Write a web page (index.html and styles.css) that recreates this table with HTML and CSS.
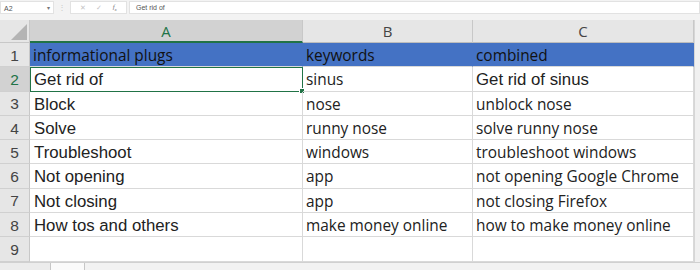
FILE: index.html
```html
<!DOCTYPE html>
<html lang="en">
<head>
    <meta charset="UTF-8">
    <title>Sheet</title>
    <link rel="stylesheet" href="styles.css">
</head>
<body>
    <div class="formula-bar">
        <div class="name-box">A2<span class="caret">&#9662;</span></div>
        <div class="dots">&#8942;</div>
        <div class="fx-box">
            <span class="fx-icon">&#10005;</span>
            <span class="fx-icon">&#10003;</span>
            <span class="fx-icon fx">f<sub>x</sub></span>
        </div>
        <div class="formula-input">Get rid of</div>
    </div>

    <div class="sheet">
        <div class="grid">
            <div class="corner"><span class="tri"></span></div>
            <div class="col-head active">A</div>
            <div class="col-head">B</div>
            <div class="col-head">C</div>

            <div class="row-head">1</div>
            <div class="cell hdr">informational plugs</div>
            <div class="cell hdr">keywords</div>
            <div class="cell hdr">combined</div>

            <div class="row-head active">2</div>
            <div class="cell a selected">Get rid of<span class="handle"></span></div>
            <div class="cell">sinus</div>
            <div class="cell big">Get rid of sinus</div>

            <div class="row-head">3</div>
            <div class="cell a">Block</div>
            <div class="cell">nose</div>
            <div class="cell">unblock nose</div>

            <div class="row-head">4</div>
            <div class="cell a">Solve</div>
            <div class="cell">runny nose</div>
            <div class="cell">solve runny nose</div>

            <div class="row-head">5</div>
            <div class="cell a">Troubleshoot</div>
            <div class="cell">windows</div>
            <div class="cell">troubleshoot windows</div>

            <div class="row-head">6</div>
            <div class="cell a">Not opening</div>
            <div class="cell">app</div>
            <div class="cell">not opening Google Chrome</div>

            <div class="row-head">7</div>
            <div class="cell a">Not closing</div>
            <div class="cell">app</div>
            <div class="cell">not closing Firefox</div>

            <div class="row-head">8</div>
            <div class="cell a">How tos and others</div>
            <div class="cell">make money online</div>
            <div class="cell">how to make money online</div>

            <div class="row-head">9</div>
            <div class="cell a"></div>
            <div class="cell"></div>
            <div class="cell"></div>
        </div>
        <div class="vscroll"></div>
    </div>

    <div class="tabs">
        <div class="tab-left"></div>
        <div class="tab-gap"></div>
        <div class="tab-right"></div>
    </div>
</body>
</html>
```

FILE: styles.css
```css
body {
    margin: 0;
    width: 700px;
    height: 270px;
    overflow: hidden;
    background: #e6e6e6;
    font-family: "Liberation Sans", Arial, sans-serif;
    color: #222;
}

.formula-bar {
    display: flex;
    align-items: center;
    height: 15px;
    background: #f3f3f3;
    padding-bottom: 5px;
}

.name-box {
    width: 54px;
    height: 13px;
    background: #fff;
    border: 1px solid #e2e2e2;
    font-size: 7px;
    line-height: 13px;
    padding-left: 3px;
    color: #555;
    display: flex;
    justify-content: space-between;
    box-sizing: border-box;
}

.caret {
    font-size: 6px;
    color: #777;
    padding-right: 3px;
}

.dots {
    width: 16px;
    text-align: center;
    font-size: 8px;
    color: #c8c8c8;
}

.fx-box {
    width: 57px;
    height: 13px;
    background: #fff;
    border: 1px solid #e2e2e2;
    box-sizing: border-box;
    display: flex;
    align-items: center;
    justify-content: space-around;
    padding: 0 4px;
}

.fx-icon {
    font-size: 7px;
    color: #c4c4c4;
}

.fx-icon.fx {
    color: #777;
    font-style: italic;
    font-family: "Liberation Serif", serif;
    font-size: 7px;
}

.fx-icon sub {
    font-size: 5px;
}

.formula-input {
    flex: 1;
    height: 13px;
    margin-left: 2px;
    background: #fff;
    border: 1px solid #e2e2e2;
    box-sizing: border-box;
    font-size: 7px;
    line-height: 12px;
    padding-left: 6px;
    color: #555;
}

.sheet {
    display: flex;
    height: 242px;
}

.grid {
    display: grid;
    grid-template-columns: 30px 273px 170px 221px;
    grid-template-rows: 23px repeat(9, 24.3px);
    background: #fff;
}

.corner {
    background: #e6e6e6;
    border-right: 1px solid #c8c8c8;
    border-bottom: 1px solid #c8c8c8;
    position: relative;
}

.tri {
    position: absolute;
    right: 2px;
    bottom: 2px;
    width: 0;
    height: 0;
    border-left: 16px solid transparent;
    border-bottom: 16px solid #b4b4b4;
}

.col-head {
    background: #e6e6e6;
    border-right: 1px solid #c8c8c8;
    border-bottom: 1px solid #bdbdbd;
    text-align: center;
    font-family: "Open Sans", sans-serif;
    font-size: 15px;
    line-height: 23px;
    color: #444;
}

.col-head.active {
    background: #d2d2d2;
    color: #217346;
    border-bottom: 2px solid #217346;
}

.row-head {
    display: flex;
    align-items: center;
    justify-content: center;
    padding-top: 2px;
    background: #e6e6e6;
    border-right: 1px solid #c8c8c8;
    border-bottom: 1px solid #d0d0d0;
    font-size: 15.5px;
    color: #444;
}

.row-head.active {
    background: #d2d2d2;
    color: #217346;
}

.cell {
    border-right: 1px solid #d9d9d9;
    border-bottom: 1px solid #d9d9d9;
    font-family: "Open Sans", sans-serif;
    font-size: 15.4px;
    line-height: 22px;
    padding: 2px 0 0 3px;
    white-space: nowrap;
    overflow: hidden;
    position: relative;
}

.cell.a {
    font-family: "Liberation Sans", Arial, sans-serif;
    font-size: 16.8px;
    padding-left: 4px;
}

.cell.big {
    font-family: "Liberation Sans", Arial, sans-serif;
    font-size: 16.8px;
}

.cell.hdr {
    background: #4472c4;
    color: #111;
    border-right-color: #4472c4;
    border-bottom-color: #d9d9d9;
}

.cell.selected {
    outline: 1.5px solid #217346;
    outline-offset: -1px;
    overflow: visible;
}

.handle {
    position: absolute;
    right: -3px;
    bottom: -3px;
    width: 4px;
    height: 4px;
    background: #217346;
    border: 1px solid #fff;
}

.vscroll {
    flex: 1;
    background: #f0f0f0;
    border-left: 1px solid #d6d6d6;
}

.tabs {
    display: flex;
    height: 8px;
    background: #e6e6e6;
    border-top: 1px solid #d0d0d0;
}

.tab-left {
    width: 50px;
    background: #ececec;
    border-right: 1px solid #c6c6c6;
}

.tab-gap {
    width: 33px;
    background: #fafafa;
}

.tab-right {
    flex: 1;
    background: #f2f2f2;
    border-left: 1px solid #c6c6c6;
}
```
